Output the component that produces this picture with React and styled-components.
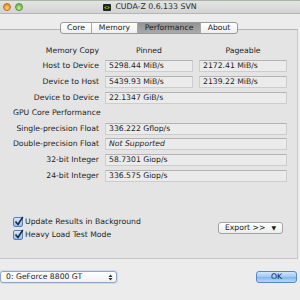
import React from "react";
import styled, { createGlobalStyle } from "styled-components";

const Global = createGlobalStyle`
  html, body { margin: 0; padding: 0; }
  body {
    background: #ececec;
    font-family: "DejaVu Sans", "Lucida Grande", sans-serif;
    font-size: 7.7px;
    color: #1d1d1d;
  }
  * { box-sizing: border-box; }
`;

const Window = styled.div`
  width: 300px;
  height: 300px;
  display: flex;
  flex-direction: column;
  background: #ececec;
  overflow: hidden;
`;

const TitleBar = styled.div`
  flex: none;
  height: 14px;
  display: grid;
  grid-template-columns: 1fr auto 1fr;
  align-items: center;
  background: linear-gradient(#e4e4e4, #d3d3d3);
  border-top: 1px solid #abb5a7;
  border-bottom: 1px solid #b5b5b5;
`;

const Lights = styled.div`
  display: flex;
  gap: 4px;
  padding-left: 3px;
`;

const Light = styled.span`
  width: 8px;
  height: 8px;
  border-radius: 50%;
  background: radial-gradient(circle at 50% 70%, ${(p) => p.$light} 0%, ${(p) => p.$base} 70%);
  border: 1px solid ${(p) => p.$rim};
`;

const Title = styled.div`
  display: flex;
  align-items: center;
  gap: 4px;
  font-size: 7.8px;
  color: #2a2a2a;
  line-height: 10px;
`;

const Body = styled.div`
  flex: 1;
  display: flex;
  flex-direction: column;
`;

const TabsRow = styled.div`
  margin-top: 8px;
  margin-bottom: -5px;
  display: flex;
  justify-content: center;
  position: relative;
  z-index: 1;
  padding-right: 2px;
`;

const Segmented = styled.div`
  display: flex;
  height: 12px;
  border: 1px solid #9a9a9a;
  border-radius: 3px;
  overflow: hidden;
  background: linear-gradient(#ffffff, #efefef);
`;

const Tab = styled.div`
  width: ${(p) => p.$w}px;
  display: flex;
  align-items: center;
  justify-content: center;
  line-height: 10px;
  font-size: 7.7px;
  color: #1a1a1a;
  border-left: ${(p) => (p.$first ? "none" : "1px solid #a9a9a9")};
  background: ${(p) => (p.$active ? "linear-gradient(#939393, #a8a8a8)" : "transparent")};
`;

const Pane = styled.div`
  flex: 1;
  display: flex;
  flex-direction: column;
  margin-right: 2px;
  background: #e4e4e4;
  border-top: 1px solid #b6b6b6;
  border-right: 1px solid #c8c8c8;
  border-bottom: 1px solid #c4c4c4;
  padding-top: 13px;
`;

const Grid = styled.div`
  display: grid;
  grid-template-columns: 99px 88px 88px;
  column-gap: 6px;
  grid-auto-rows: 15.6px;
  align-items: center;
`;

const Label = styled.div`
  text-align: right;
  white-space: nowrap;
  line-height: 10px;
`;

const Head = styled.div`
  text-align: center;
  line-height: 10px;
`;

const Section = styled.div`
  grid-column: 1 / -1;
  padding-left: 13px;
  line-height: 10px;
`;

const Field = styled.div`
  height: 12px;
  grid-column: ${(p) => (p.$wide ? "2 / -1" : "auto")};
  border: 1px solid #cdcdcd;
  border-top-color: #b3b3b3;
  background: #ebebeb;
  padding-left: 3px;
  line-height: 10px;
  white-space: nowrap;
  font-style: ${(p) => (p.$italic ? "italic" : "normal")};
`;

const Options = styled.div`
  margin-top: auto;
  display: flex;
  align-items: center;
  justify-content: space-between;
  padding: 0 14px 17px 13px;
`;

const Checks = styled.div`
  display: flex;
  flex-direction: column;
`;

const CheckRow = styled.label`
  height: 13px;
  display: flex;
  align-items: center;
  gap: 2px;
  line-height: 10px;
`;

const Box = styled.span`
  width: 10px;
  height: 10px;
  border: 1px solid #5b7fb3;
  border-radius: 2px;
  background: linear-gradient(#d6e7fb, #8fbdf0);
  display: flex;
  align-items: center;
  justify-content: center;
  position: relative;
`;

const Button = styled.div`
  width: ${(p) => p.$w}px;
  height: 12px;
  border: 1px solid ${(p) => (p.$primary ? "#5a86c0" : "#a3a3a3")};
  border-radius: 3px;
  background: ${(p) =>
    p.$primary
      ? "linear-gradient(#d4e6fb 0%, #9cc8f4 50%, #7fb6ef 51%, #b5d8fb 100%)"
      : "linear-gradient(#ffffff, #ededed)"};
  display: flex;
  align-items: center;
  justify-content: center;
  gap: 6px;
  line-height: 10px;
  color: #1a1a1a;
`;

const Footer = styled.div`
  flex: none;
  height: 41px;
  display: flex;
  justify-content: space-between;
  align-items: flex-start;
  padding: 12px 3px 0 0;
`;

const Combo = styled.div`
  width: 117px;
  height: 12px;
  border: 1px solid #8ea6c7;
  border-radius: 3px;
  background: linear-gradient(#ffffff, #f1f1f1);
  box-shadow: 0 0 0 1px rgba(150, 185, 230, 0.35);
  display: flex;
  align-items: center;
  justify-content: space-between;
  padding: 0 3px 0 5px;
  line-height: 10px;
`;

const Arrow = () => (
  <svg width="5" height="7" viewBox="0 0 5 7">
    <path d="M0.5 3 L2.5 0.6 L4.5 3 Z M0.5 4 L2.5 6.4 L4.5 4 Z" fill="#333" />
  </svg>
);

const Check = () => (
  <svg width="10" height="11" viewBox="0 0 10 11" style={{ position: "absolute", left: 0, top: -2 }}>
    <path d="M1.5 5.5 L4 8.5 L8.8 1" stroke="#1b2a44" strokeWidth="1.6" fill="none" />
  </svg>
);

const Logo = () => (
  <svg width="8" height="7" viewBox="0 0 8 7">
    <rect x="0" y="0" width="8" height="7" rx="1" fill="#222" />
    <path d="M1 3.5 Q4 0.5 7 3.5 Q4 6.5 1 3.5 Z" fill="#76b900" />
    <circle cx="4" cy="3.5" r="1.1" fill="#222" />
  </svg>
);

const rows = [
  ["Host to Device", "5298.44 MiB/s", "2172.41 MiB/s"],
  ["Device to Host", "5439.93 MiB/s", "2139.22 MiB/s"],
];

const perf = [
  ["Single-precision Float", "336.222 Gflop/s"],
  ["Double-precision Float", "Not Supported", true],
  ["32-bit Integer", "58.7301 Giop/s"],
  ["24-bit Integer", "336.575 Giop/s"],
];

export default function App() {
  return (
    <Window>
      <Global />
      <TitleBar>
        <Lights>
          <Light $base="#e8902a" $light="#ffd27a" $rim="#b8731f" />
          <Light $base="#76b845" $light="#c8f09a" $rim="#56923a" />
        </Lights>
        <Title>
          <Logo />
          CUDA-Z 0.6.133 SVN
        </Title>
        <div />
      </TitleBar>
      <Body>
        <TabsRow>
          <Segmented>
            <Tab $w={30} $first>Core</Tab>
            <Tab $w={46}>Memory</Tab>
            <Tab $w={63} $active>Performance</Tab>
            <Tab $w={37}>About</Tab>
          </Segmented>
        </TabsRow>
        <Pane>
          <Grid>
            <Label>Memory Copy</Label>
            <Head>Pinned</Head>
            <Head>Pageable</Head>
            {rows.map(([l, a, b]) => (
              <React.Fragment key={l}>
                <Label>{l}</Label>
                <Field>{a}</Field>
                <Field>{b}</Field>
              </React.Fragment>
            ))}
            <Label>Device to Device</Label>
            <Field $wide>22.1347 GiB/s</Field>
            <Section>GPU Core Performance</Section>
            {perf.map(([l, v, it]) => (
              <React.Fragment key={l}>
                <Label>{l}</Label>
                <Field $wide $italic={it}>{v}</Field>
              </React.Fragment>
            ))}
          </Grid>
          <Options>
            <Checks>
              <CheckRow>
                <Box><Check /></Box>
                Update Results in Background
              </CheckRow>
              <CheckRow>
                <Box><Check /></Box>
                Heavy Load Test Mode
              </CheckRow>
            </Checks>
            <Button $w={65}>
              <span>Export &gt;&gt;</span>
              <span style={{ fontSize: "6px" }}>▼</span>
            </Button>
          </Options>
        </Pane>
        <Footer>
          <Combo>
            <span>0: GeForce 8800 GT</span>
            <Arrow />
          </Combo>
          <Button $w={41} $primary>OK</Button>
        </Footer>
      </Body>
    </Window>
  );
}
